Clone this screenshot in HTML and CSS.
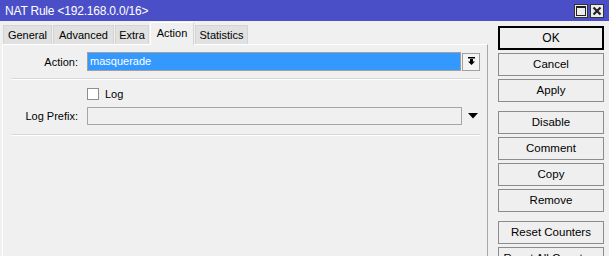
FILE: index.html
```html
<!DOCTYPE html>
<html>
<head>
<meta charset="utf-8">
<link rel="stylesheet" href="styles.css">
</head>
<body>
<div class="window">
  <div class="titlebar">
    <span class="title">NAT Rule &lt;192.168.0.0/16&gt;</span>
    <div class="tb-buttons">
      <span class="tb-btn"><svg width="10" height="10" viewBox="0 0 10 10"><rect x="0.5" y="0.5" width="9" height="9" fill="none" stroke="#222" stroke-width="1"/><rect x="0" y="0" width="10" height="2" fill="#222"/></svg></span>
      <span class="tb-btn"><svg width="10" height="10" viewBox="0 0 10 10"><path d="M1.5 1.5 L8.5 8.5 M8.5 1.5 L1.5 8.5" stroke="#222" stroke-width="2.2"/></svg></span>
    </div>
  </div>
  <div class="main">
    <div class="left">
      <div class="tabs">
        <div class="tab w-general">General</div>
        <div class="tab w-advanced">Advanced</div>
        <div class="tab w-extra">Extra</div>
        <div class="tab active w-action">Action</div>
        <div class="tab w-stats">Statistics</div>
      </div>
      <div class="panel">
        <div class="row row-action">
          <label class="lbl">Action:</label>
          <div class="input selected">masquerade</div>
          <span class="dd-btn"><svg width="9" height="9" viewBox="0 0 9 9"><rect x="1" y="0" width="7" height="1.5" fill="#000"/><path d="M3 2 H6 V4.5 H8 L4.5 8 L1 4.5 H3 Z" fill="#000"/></svg></span>
        </div>
        <div class="sep"></div>
        <div class="row row-check">
          <span class="checkbox"></span>
          <span class="check-label">Log</span>
        </div>
        <div class="row row-prefix">
          <label class="lbl">Log Prefix:</label>
          <div class="input plain"></div>
          <span class="dd-arrow"><svg width="10" height="6" viewBox="0 0 10 6"><path d="M0 0 H10 L5 5.5 Z" fill="#000"/></svg></span>
        </div>
        <div class="sep sep2"></div>
      </div>
    </div>
    <div class="buttons">
      <div class="btn default">OK</div>
      <div class="btn">Cancel</div>
      <div class="btn">Apply</div>
      <div class="btn gap">Disable</div>
      <div class="btn">Comment</div>
      <div class="btn">Copy</div>
      <div class="btn">Remove</div>
      <div class="btn gap">Reset Counters</div>
      <div class="btn">Reset All Counters</div>
    </div>
  </div>
</div>
</body>
</html>
```

FILE: styles.css
```css
html, body {
  margin: 0;
  padding: 0;
  background: #f0f0f0;
}
body {
  width: 609px;
  height: 256px;
  overflow: hidden;
  font-family: "Liberation Sans", Arial, sans-serif;
  font-size: 11px;
  color: #000;
}
.window {
  display: flex;
  flex-direction: column;
  height: 256px;
}
.titlebar {
  height: 21px;
  background: #4b4fc7;
  display: flex;
  align-items: center;
  justify-content: space-between;
  padding: 0 5px 0 5px;
  flex-shrink: 0;
}
.title {
  color: #fff;
  font-size: 12px;
  letter-spacing: -0.2px;
}
.tb-buttons {
  display: flex;
  gap: 2px;
}
.tb-btn {
  width: 12px;
  height: 12px;
  border: 1px solid #333;
  background: #ececec;
  display: flex;
  align-items: center;
  justify-content: center;
}
.main {
  display: flex;
  flex: 1;
  min-height: 0;
  overflow: hidden;
}
.left {
  width: 486px;
  padding: 2px 0 0 2px;
  display: flex;
  flex-direction: column;
  flex-shrink: 0;
}
.tabs {
  display: flex;
  align-items: flex-end;
  height: 21px;
  padding-left: 1px;
  position: relative;
  z-index: 1;
}
.tab {
  height: 18px;
  line-height: 18px;
  background: #e1e1e1;
  border: 1px solid #d4d4d4;
  border-bottom: none;
  text-align: center;
  margin-right: 1px;
  box-sizing: content-box;
}
.tab.active {
  background: #f0f0f0;
  height: 22px;
  line-height: 20px;
  border-color: #fff #d4d4d4 #f0f0f0 #fff;
  margin-bottom: -1px;
}
.w-general { width: 47px; }
.w-advanced { width: 59px; }
.w-extra { width: 32px; }
.w-action { width: 42px; }
.w-stats { width: 51px; }
.panel {
  flex: 1;
  border-top: 1px solid #fff;
  border-left: 1px solid #fff;
  border-right: 1px solid #a8a8a8;
  background: #f0f0f0;
  padding-top: 7px;
}
.row {
  display: flex;
  align-items: center;
}
.lbl {
  width: 75px;
  text-align: right;
  margin-right: 9px;
}
.input {
  width: 371px;
  height: 17px;
  border: 1px solid #a6a6a6;
  box-sizing: content-box;
  line-height: 17px;
  padding-left: 2px;
  margin-right: 1px;
}
.input.selected {
  background: #3399ff;
  color: #fff;
  border-color: #a0a0a0;
  width: 370px;
}
.input.plain {
  background: #f0f0f0;
  height: 16px;
}
.dd-btn {
  width: 16px;
  height: 16px;
  border: 1px solid #a0a0a0;
  background: #f4f4f4;
  display: flex;
  align-items: center;
  justify-content: center;
}
.dd-arrow {
  margin-left: 5px;
  display: flex;
  align-items: center;
}
.sep {
  margin: 7px 7px 0 8px;
  height: 1px;
  background: #d8d8d8;
  border-bottom: 1px solid #fff;
}
.sep2 {
  margin-top: 9px;
}
.row-check {
  margin-top: 8px;
  padding-left: 84px;
  height: 12px;
}
.checkbox {
  width: 10px;
  height: 10px;
  border: 1px solid #8e8e8e;
  background: #fff;
  display: inline-block;
}
.check-label {
  margin-left: 6px;
}
.row-prefix {
  margin-top: 7px;
}
.buttons {
  display: flex;
  flex-direction: column;
  margin-left: 10px;
  padding-top: 5px;
  width: 106px;
}
.btn {
  flex-shrink: 0;
  height: 21px;
  line-height: 21px;
  border: 1px solid #8c8c8c;
  background: #efefef;
  text-align: center;
  margin-bottom: 3px;
  box-sizing: content-box;
  white-space: nowrap;
  overflow: hidden;
  font-size: 11.5px;
}
.btn.default {
  height: 22px;
  line-height: 22px;
  border: 1px solid #000;
  outline: 1px solid #000;
  outline-offset: -2px;
  font-size: 12px;
}
.btn.gap {
  margin-top: 6px;
}
```
